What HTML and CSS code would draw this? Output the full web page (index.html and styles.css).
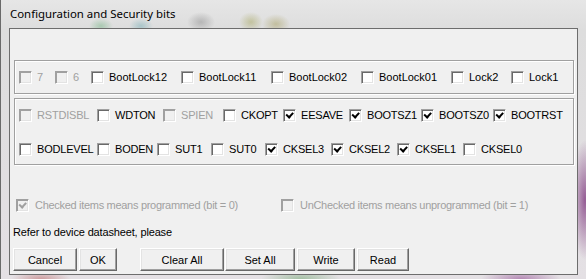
FILE: index.html
```html
<!DOCTYPE html>
<html lang="en">
<head>
    <meta charset="UTF-8">
    <title>Configuration and Security bits</title>
    <link rel="stylesheet" href="styles.css">
</head>
<body>

    <div class="window">
        <div class="titlebar">Configuration and Security bits</div>

        <div class="client">
            <!-- Lock bits -->
            <div class="group group-lock">
                <div class="row">
                    <label class="bit w36 dim"><span class="box"></span>7</label>
                    <label class="bit w36 dim"><span class="box"></span>6</label>
                    <label class="bit w90"><span class="box"></span>BootLock12</label>
                    <label class="bit w90"><span class="box"></span>BootLock11</label>
                    <label class="bit w90"><span class="box"></span>BootLock02</label>
                    <label class="bit w90"><span class="box"></span>BootLock01</label>
                    <label class="bit w60"><span class="box"></span>Lock2</label>
                    <label class="bit w60"><span class="box"></span>Lock1</label>
                </div>
            </div>

            <!-- Fuse bits -->
            <div class="group group-fuse">
                <div class="row fuse">
                    <label class="bit w78 dim"><span class="box"></span>RSTDISBL</label>
                    <label class="bit w66"><span class="box"></span>WDTON</label>
                    <label class="bit w60 dim"><span class="box"></span>SPIEN</label>
                    <label class="bit w60"><span class="box"></span>CKOPT</label>
                    <label class="bit w66"><span class="box on"></span>EESAVE</label>
                    <label class="bit w72"><span class="box on"></span>BOOTSZ1</label>
                    <label class="bit w72"><span class="box on"></span>BOOTSZ0</label>
                    <label class="bit w72"><span class="box on"></span>BOOTRST</label>
                </div>
                <div class="row fuse">
                    <label class="bit w78"><span class="box"></span>BODLEVEL</label>
                    <label class="bit w60"><span class="box"></span>BODEN</label>
                    <label class="bit w54"><span class="box"></span>SUT1</label>
                    <label class="bit w54"><span class="box"></span>SUT0</label>
                    <label class="bit w66"><span class="box on"></span>CKSEL3</label>
                    <label class="bit w66"><span class="box on"></span>CKSEL2</label>
                    <label class="bit w66"><span class="box on"></span>CKSEL1</label>
                    <label class="bit w66"><span class="box"></span>CKSEL0</label>
                </div>
            </div>

            <div class="row legend">
                <label class="bit w265 dim"><span class="box on"></span>Checked items means programmed (bit = 0)</label>
                <label class="bit dim"><span class="box"></span>UnChecked items means unprogrammed (bit = 1)</label>
            </div>

            <p class="note">Refer to device datasheet, please</p>

            <div class="buttons">
                <button class="btn btn-cancel">Cancel</button>
                <button class="btn btn-ok">OK</button>
                <button class="btn btn-clear">Clear All</button>
                <button class="btn btn-set">Set All</button>
                <button class="btn btn-write">Write</button>
                <button class="btn btn-read">Read</button>
            </div>
        </div>
    </div>

</body>
</html>
```

FILE: styles.css
```css
body {
    margin: 0;
    width: 586px;
    height: 279px;
    overflow: hidden;
    font-family: "Liberation Sans", Arial, sans-serif;
    font-size: 11px;
    color: #000;
    background-color: #d9d9d9;
}
.window {
    height: 279px;
    box-sizing: border-box;
    padding: 0 8px 0 8px;
    border-left: 1px solid #6a6a6a;
    background:
        radial-gradient(ellipse 14px 60px at 584px 200px, rgba(130, 60, 130, 0.8), transparent),
        radial-gradient(ellipse 40px 10px at 300px 279px, rgba(120, 170, 120, 0.6), transparent),
        radial-gradient(ellipse 30px 8px at 40px 279px, rgba(190, 110, 110, 0.6), transparent),
        radial-gradient(ellipse 40px 10px at 520px 279px, rgba(160, 100, 160, 0.7), transparent),
        radial-gradient(ellipse 12px 8px at 100px 26px, rgba(90, 170, 110, 0.4), transparent),
        radial-gradient(ellipse 12px 8px at 140px 26px, rgba(90, 160, 170, 0.4), transparent),
        radial-gradient(ellipse 14px 10px at 200px 22px, rgba(120, 120, 120, 0.4), transparent),
        radial-gradient(ellipse 12px 10px at 250px 22px, rgba(150, 150, 60, 0.4), transparent),
        radial-gradient(ellipse 14px 10px at 275px 24px, rgba(150, 140, 60, 0.4), transparent),
        linear-gradient(to bottom, #e6e6e6, #dddddd 30px, #e4e0e4);
}
.titlebar {
    height: 28px;
    line-height: 28px;
    padding-left: 1px;
    font-family: "Noto Sans", "Open Sans", sans-serif;
    font-size: 11.4px;
    color: #000;
}
.client {
    height: 247px;
    box-sizing: border-box;
    border: 1px solid #6d6d6d;
    background-color: #f0f0f0;
    padding: 31px 3px 0 3px;
}

/* etched group frames */
.group {
    margin-left: 1px;
    box-sizing: border-box;
    border: 1px solid #a0a0a0;
    box-shadow: inset 1px 1px #fff, 1px 1px #fff;
    padding: 10px 0 0 4px;
}
.group-lock {
    height: 34px;
}
.group-fuse {
    height: 67px;
    margin-top: 4px;
    display: flex;
    flex-direction: column;
    gap: 21px;
}

.row {
    display: flex;
    align-items: center;
    height: 13px;
}
.bit {
    display: flex;
    align-items: center;
    gap: 5px;
    flex: none;
    white-space: nowrap;
    line-height: 13px;
}
.fuse .bit {
    letter-spacing: -0.2px;
}
.dim {
    color: #a0a0a0;
}
.w36 { width: 36px; }
.w54 { width: 54px; }
.w60 { width: 60px; }
.w66 { width: 66px; }
.w72 { width: 72px; }
.w78 { width: 78px; }
.w90 { width: 90px; }
.w265 { width: 265px; }

.box {
    position: relative;
    width: 13px;
    height: 13px;
    box-sizing: border-box;
    flex: none;
    border: 1px solid;
    border-color: #a0a0a0 #fff #fff #a0a0a0;
    box-shadow: inset 1px 1px #696969, inset -1px -1px #e3e3e3;
    background-color: #fff;
}
.dim .box {
    background-color: #f0f0f0;
    box-shadow: inset 1px 1px #a0a0a0, inset -1px -1px #e3e3e3;
}
.box.on::after {
    content: "";
    position: absolute;
    left: 2px;
    top: 1.5px;
    width: 5px;
    height: 2.5px;
    border-left: 2px solid #000;
    border-bottom: 2px solid #000;
    transform: rotate(-48deg);
}
.dim .box.on::after {
    border-color: #a0a0a0;
}

.legend {
    margin-top: 34px;
    padding-left: 3px;
    letter-spacing: -0.3px;
}
.legend .bit {
    gap: 6px;
}
.note {
    margin: 13px 0 0 0;
    line-height: 14px;
    letter-spacing: -0.15px;
}

.buttons {
    display: flex;
    margin-top: 9px;
}
.btn {
    height: 23px;
    padding: 0;
    box-sizing: border-box;
    font-family: "Liberation Sans", Arial, sans-serif;
    font-size: 11px;
    color: #000;
    background-color: #f0f0f0;
    border: 1px solid;
    border-color: #fff #696969 #696969 #fff;
    box-shadow: inset -1px -1px #a0a0a0, inset 1px 1px #e3e3e3;
}
.btn-cancel { width: 64px; }
.btn-ok { width: 38px; margin-left: 2px; }
.btn-clear { width: 84px; margin-left: 23px; }
.btn-set { width: 70px; margin-left: 1px; }
.btn-write { width: 58px; margin-left: 2px; }
.btn-read { width: 52px; margin-left: 2px; }
```
